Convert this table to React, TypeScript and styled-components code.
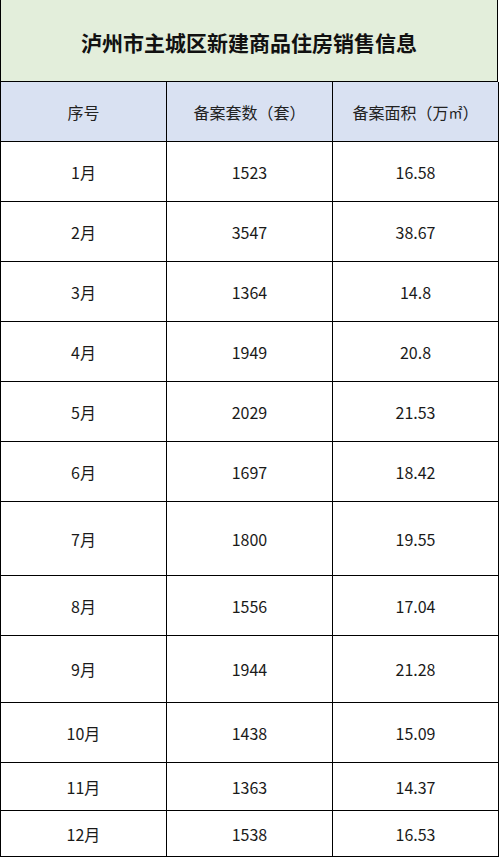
import React from 'react';
import styled, { createGlobalStyle } from 'styled-components';

const GlobalStyle = createGlobalStyle`
  html, body {
    margin: 0;
    padding: 0;
    background: #ffffff;
  }
  body {
    font-family: "Noto Sans CJK SC", "Noto Sans", sans-serif;
    color: #1a1a1a;
  }
`;

type Row = { month: string; count: string; area: string; height: number };

const rows: Row[] = [
  { month: '1月', count: '1523', area: '16.58', height: 60 },
  { month: '2月', count: '3547', area: '38.67', height: 60 },
  { month: '3月', count: '1364', area: '14.8', height: 60 },
  { month: '4月', count: '1949', area: '20.8', height: 60 },
  { month: '5月', count: '2029', area: '21.53', height: 60 },
  { month: '6月', count: '1697', area: '18.42', height: 60 },
  { month: '7月', count: '1800', area: '19.55', height: 74 },
  { month: '8月', count: '1556', area: '17.04', height: 60 },
  { month: '9月', count: '1944', area: '21.28', height: 67 },
  { month: '10月', count: '1438', area: '15.09', height: 60 },
  { month: '11月', count: '1363', area: '14.37', height: 48 },
  { month: '12月', count: '1538', area: '16.53', height: 46 },
];

const App: React.FC = () => {
  return (
    <>
      <GlobalStyle />
      <Table>
        <Title>泸州市主城区新建商品住房销售信息</Title>
        <HeadRow>
          <HeadCell>序号</HeadCell>
          <HeadCell>备案套数（套）</HeadCell>
          <HeadCell>
            备案面积（万<Unit>㎡</Unit>）
          </HeadCell>
        </HeadRow>
        {rows.map((r) => (
          <BodyRow key={r.month} $h={r.height}>
            <Cell>{r.month}</Cell>
            <Cell>{r.count}</Cell>
            <Cell>{r.area}</Cell>
          </BodyRow>
        ))}
      </Table>
    </>
  );
};

const Table = styled.div`
  width: 499px;
  box-sizing: border-box;
  border-left: 1px solid #000;
  display: flex;
  flex-direction: column;
`;

const Title = styled.div`
  height: 82px;
  box-sizing: border-box;
  background: #e3eedb;
  border-right: 1px solid #000;
  border-bottom: 1px solid #000;
  margin-right: 1px;
  display: flex;
  align-items: center;
  justify-content: center;
  font-size: 21px;
  font-weight: 700;
  color: #111;
  padding-top: 2px;
`;

const HeadRow = styled.div`
  display: grid;
  grid-template-columns: 166px 166px 166px;
  height: 60px;
  background: #d9e1f2;
`;

const BodyRow = styled.div<{ $h: number }>`
  display: grid;
  grid-template-columns: 166px 166px 166px;
  height: ${({ $h }) => $h}px;
  background: #ffffff;
`;

const Cell = styled.div`
  box-sizing: border-box;
  border-right: 1px solid #000;
  border-bottom: 1px solid #000;
  display: flex;
  align-items: center;
  justify-content: center;
  font-size: 16px;
  color: #1a1a1a;
`;

const HeadCell = styled(Cell)`
  font-size: 16px;
  color: #222;
`;

const Unit = styled.span`
  font-size: 14px;
`;

export default App;
